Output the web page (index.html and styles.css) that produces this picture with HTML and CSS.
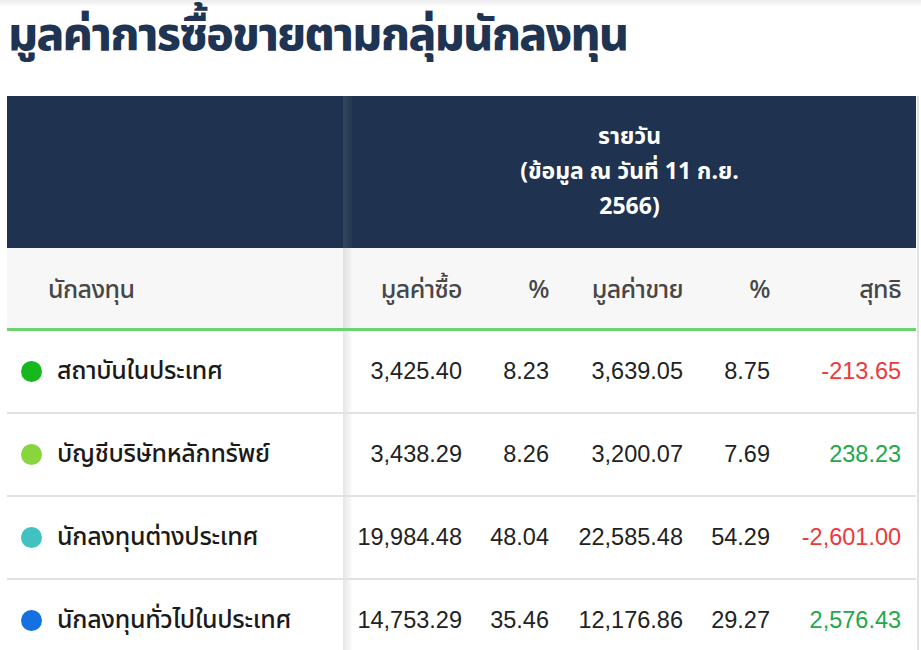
FILE: index.html
```html
<!DOCTYPE html>
<html lang="th">
<head>
<meta charset="utf-8">
<title>มูลค่าการซื้อขายตามกลุ่มนักลงทุน</title>
<link rel="stylesheet" href="styles.css">
</head>
<body>
<h1 class="title">มูลค่าการซื้อขายตามกลุ่มนักลงทุน</h1>
<div class="frame">
  <table class="trade">
    <colgroup>
      <col class="c-name"><col class="c-val"><col class="c-pct"><col class="c-val"><col class="c-pct"><col class="c-net">
    </colgroup>
    <thead>
      <tr class="band">
        <th class="sticky"></th>
        <th colspan="5" class="period">รายวัน<br>(ข้อมูล ณ วันที่ 11 ก.ย.<br>2566)</th>
      </tr>
      <tr class="labels">
        <th class="sticky name-h">นักลงทุน</th>
        <th>มูลค่าซื้อ</th>
        <th>%</th>
        <th>มูลค่าขาย</th>
        <th>%</th>
        <th>สุทธิ</th>
      </tr>
    </thead>
    <tbody>
      <tr>
        <td class="sticky name"><span class="dot d1"></span>สถาบันในประเทศ</td>
        <td>3,425.40</td><td>8.23</td><td>3,639.05</td><td>8.75</td><td class="neg">-213.65</td>
      </tr>
      <tr>
        <td class="sticky name"><span class="dot d2"></span>บัญชีบริษัทหลักทรัพย์</td>
        <td>3,438.29</td><td>8.26</td><td>3,200.07</td><td>7.69</td><td class="pos">238.23</td>
      </tr>
      <tr>
        <td class="sticky name"><span class="dot d3"></span>นักลงทุนต่างประเทศ</td>
        <td>19,984.48</td><td>48.04</td><td>22,585.48</td><td>54.29</td><td class="neg">-2,601.00</td>
      </tr>
      <tr>
        <td class="sticky name"><span class="dot d4"></span>นักลงทุนทั่วไปในประเทศ</td>
        <td>14,753.29</td><td>35.46</td><td>12,176.86</td><td>29.27</td><td class="pos">2,576.43</td>
      </tr>
    </tbody>
  </table>
</div>
</body>
</html>
```

FILE: styles.css
```css
html {
  background: #fff linear-gradient(#ececec 0, #ffffff 7px) no-repeat;
}
body {
  margin: 0;
  padding: 0 0 0 7px;
  font-family: "Noto Sans Thai", "Noto Sans", sans-serif;
}
.title {
  margin: 0;
  height: 96px;
  box-sizing: border-box;
  padding: 4px 0 0 1px;
  font-size: 46px;
  font-weight: 800;
  line-height: 64px;
  color: #1f3453;
  letter-spacing: -1.6px;
}
.frame {
  width: 910px;
  border-right: 2px solid #dfe1e5;
}
.trade {
  width: 909px;
  border-collapse: collapse;
  table-layout: fixed;
}
.c-name { width: 336px; }
.c-val { width: 134px; }
.c-pct { width: 87px; }
.c-net { width: 131px; }

.sticky { position: relative; }
.sticky::after {
  content: "";
  position: absolute;
  top: 0;
  bottom: 0;
  right: -10px;
  width: 10px;
  background: linear-gradient(to right, rgba(140, 140, 140, 0.22), rgba(140, 140, 140, 0));
  pointer-events: none;
}

.band th {
  background: #1f3350;
  height: 152px;
  padding: 0;
}
.period {
  color: #fff;
  font-size: 23px;
  font-weight: 700;
  line-height: 35px;
  text-align: center;
}

.labels th {
  background: #f7f7f7;
  height: 81px;
  padding: 4px 15px 0 0;
  border-bottom: 3px solid #6cd36e;
  font-size: 25px;
  font-weight: 500;
  color: #474747;
  text-align: right;
  letter-spacing: -0.6px;
  box-sizing: border-box;
}
.labels .name-h {
  text-align: left;
  padding-left: 41px;
}

tbody td {
  height: 81px;
  padding: 0 15px 0 0;
  border-bottom: 2px solid #e0e2e6;
  font-family: "Liberation Sans", Arial, sans-serif;
  font-size: 23.5px;
  color: #222;
  text-align: right;
  white-space: nowrap;
}
tbody td.name {
  text-align: left;
  padding-left: 14px;
  font-family: "Noto Sans Thai", "Noto Sans", sans-serif;
  font-size: 25px;
  font-weight: 500;
  color: #1a1a1a;
  letter-spacing: -0.3px;
}
.dot {
  display: inline-block;
  width: 21px;
  height: 21px;
  border-radius: 50%;
  margin-right: 15px;
  vertical-align: -3px;
}
.d1 { background: #17b81d; }
.d2 { background: #88d63d; }
.d3 { background: #41c1bf; }
.d4 { background: #1570e0; }
.neg { color: #ec3a3a; }
.pos { color: #21a84a; }
```
